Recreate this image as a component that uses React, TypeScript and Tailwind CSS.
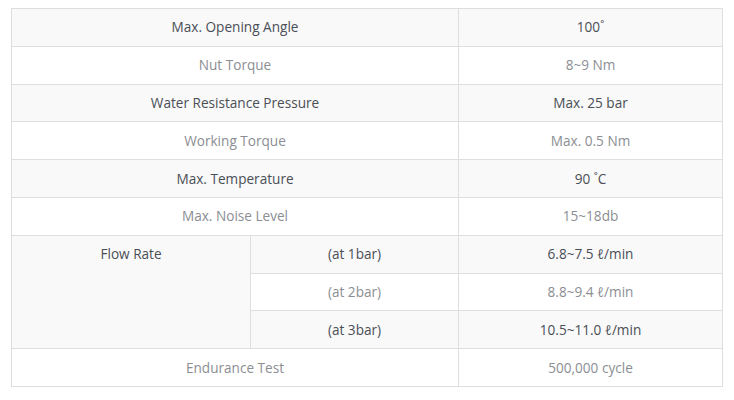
const rows: { label: string; value: string }[] = [
  { label: 'Max. Opening Angle', value: '100˚' },
  { label: 'Nut Torque', value: '8~9 Nm' },
  { label: 'Water Resistance Pressure', value: 'Max. 25 bar' },
  { label: 'Working Torque', value: 'Max. 0.5 Nm' },
  { label: 'Max. Temperature', value: '90 ˚C' },
  { label: 'Max. Noise Level', value: '15~18db' },
];

const flow = [
  { at: '(at 1bar)', value: '6.8~7.5 ℓ/min' },
  { at: '(at 2bar)', value: '8.8~9.4 ℓ/min' },
  { at: '(at 3bar)', value: '10.5~11.0 ℓ/min' },
];

const odd = 'bg-[#f9f9f9] text-[#4a4e56]';
const even = 'bg-white text-[#8b8e93]';
const cell = 'border border-[#dedede] h-[37.8px] p-0 text-center align-middle';

export default function App() {
  return (
    <div className="bg-white w-[734px] h-[400px] pt-[8px] pl-[11px]" style={{ fontFamily: '"Open Sans", sans-serif' }}>
      <table className="border-collapse w-[711px] text-[13.6px] leading-[18px] table-fixed">
        <colgroup>
          <col className="w-[239px]" />
          <col className="w-[208px]" />
          <col className="w-[264px]" />
        </colgroup>
        <tbody>
          {rows.map((r, i) => (
            <tr key={r.label} className={i % 2 === 0 ? odd : even}>
              <td colSpan={2} className={cell}>{r.label}</td>
              <td className={cell}>{r.value}</td>
            </tr>
          ))}
          {flow.map((f, i) => (
            <tr key={f.at} className={i % 2 === 0 ? odd : even}>
              {i === 0 && (
                <td rowSpan={3} className={`${cell} align-top pt-[9px] bg-[#f9f9f9] text-[#4a4e56]`}>Flow Rate</td>
              )}
              <td className={cell}>{f.at}</td>
              <td className={cell}>{f.value}</td>
            </tr>
          ))}
          <tr className={even}>
            <td colSpan={2} className={cell}>Endurance Test</td>
            <td className={cell}>500,000 cycle</td>
          </tr>
        </tbody>
      </table>
    </div>
  );
}
